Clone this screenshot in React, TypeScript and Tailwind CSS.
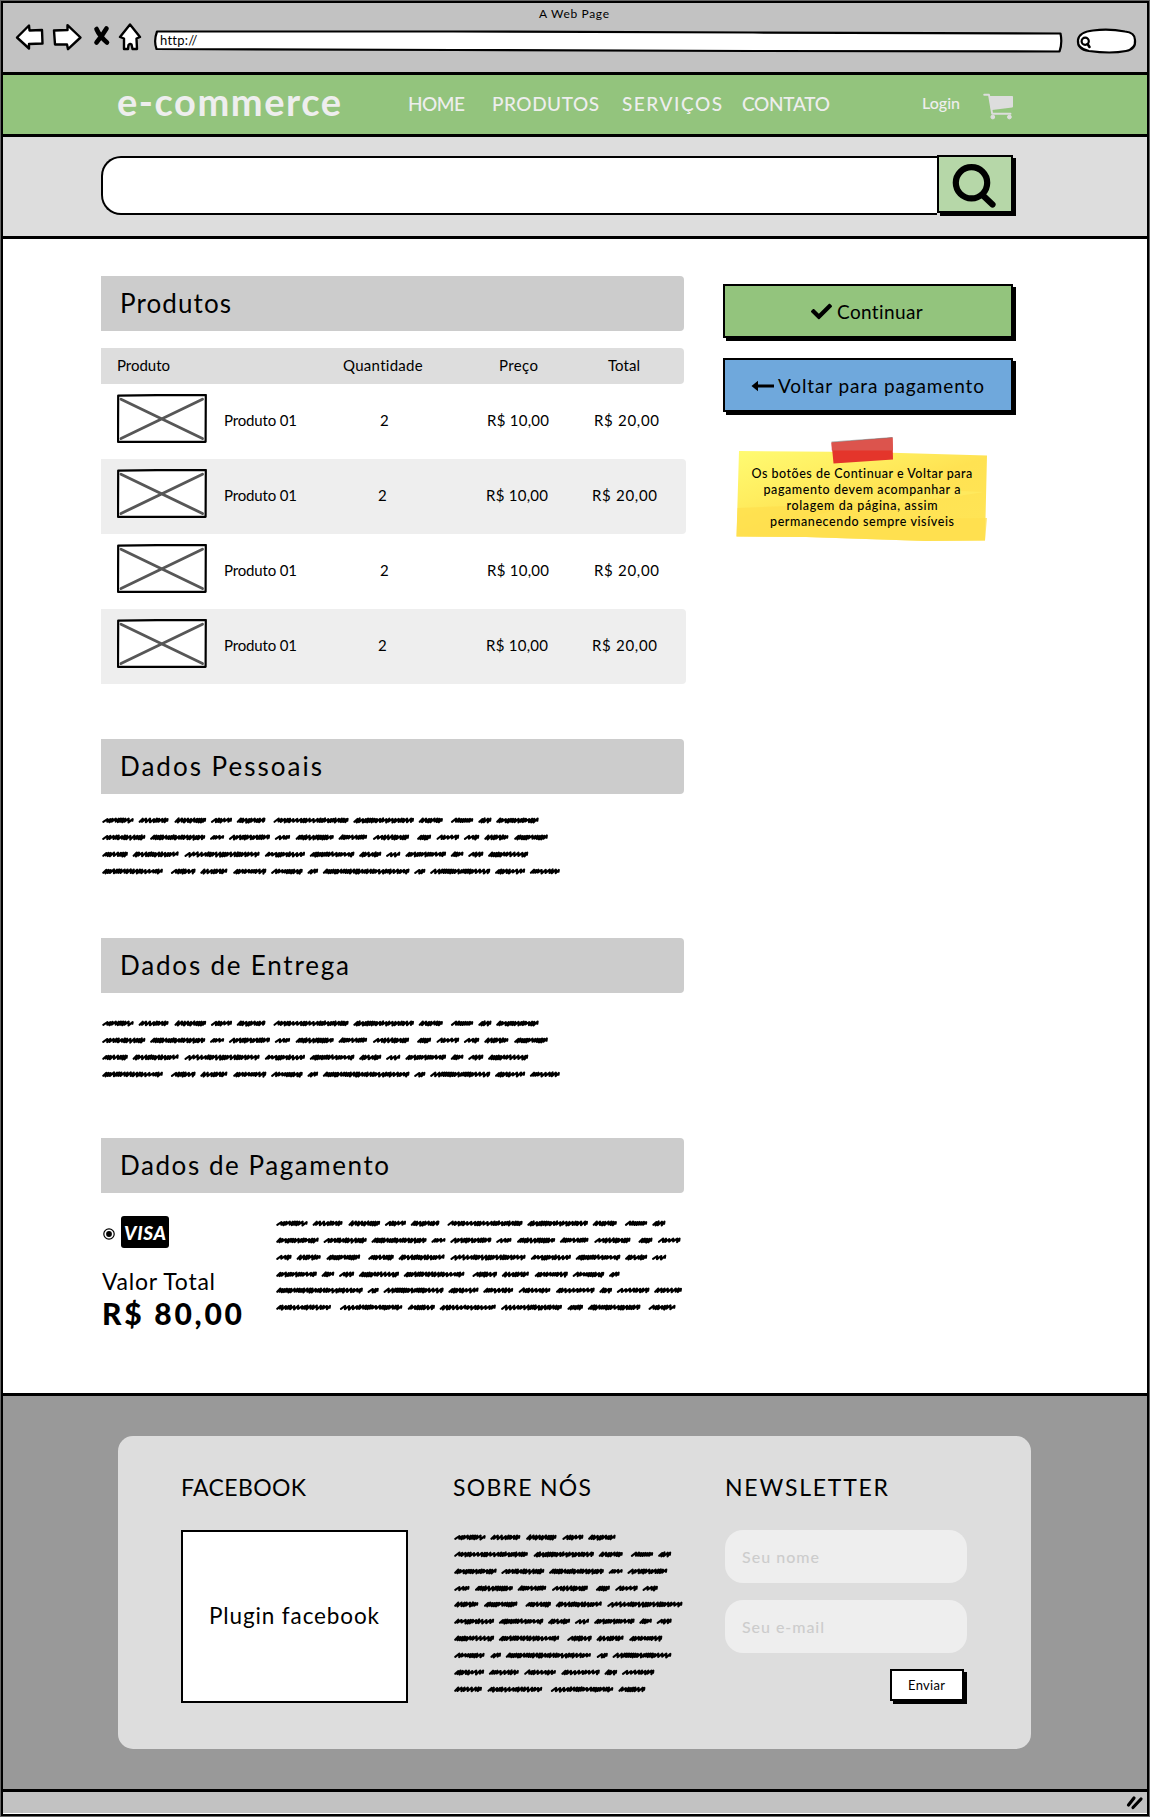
import React, { useLayoutEffect, useRef } from "react";
import { FaCheck } from "react-icons/fa";

/* Text tracked so that it spans the given width. */
function Label({ w, className = "", children }: { w: number; className?: string; children: string }) {
  const ref = useRef<HTMLSpanElement>(null);
  useLayoutEffect(() => {
    const el = ref.current;
    if (!el) return;
    el.style.letterSpacing = "0px";
    const natural = el.getBoundingClientRect().width;
    el.style.letterSpacing = `${(w - natural) / Math.max(1, children.length - 1)}px`;
  }, [w, children]);
  return (
    <span className="block" style={{ width: w }}>
      <span ref={ref} className={`inline-block whitespace-nowrap ${className}`}>
        {children}
      </span>
    </span>
  );
}

/* Handwriting placeholder. Word lengths in px; 0 marks a sentence end. */
const WORDS = [
  32, 31.5, 32, 21.5, 29, 0, 75.5, 61, 24.5, 0, 23, 13.5, 43, 43.5, 55.5, 14.5, 41.5, 16.5, 38.5, 30, 36.5, 0, 15, 23, 16,
  25.5, 34, 0, 26, 47.5, 76, 40.5, 45, 22.5, 15, 41, 13, 15.5, 40.5, 61, 0, 25, 28.5, 33.5, 32, 11, 87, 11.5, 60.5, 30.5,
  31, 33, 39, 13, 33, 29, 56, 0, 63.5, 27.5, 57, 62, 16, 53, 0, 28,
];

function scribble(x0: number, len: number, seed: number) {
  let s = seed * 7919 + 13;
  const rnd = () => ((s = (s * 1103515245 + 12345) % 2147483648), s / 2147483648);
  let x = x0 + 1.2;
  const end = x0 + len - 1.2;
  let d = `M${x.toFixed(1)} 9.8`;
  while (x < end - 1) {
    const wide = rnd() > 0.62;
    x = Math.min(x + (wide ? 4.2 : 3.1), end);
    d += ` L${x.toFixed(1)} ${(6.4 + rnd() * 0.7).toFixed(1)}`;
    if (x >= end - 1.2) {
      d += ` L${(x - 0.3).toFixed(1)} 8.8`;
      break;
    }
    x -= wide ? 0.2 : 0.9;
    d += ` L${x.toFixed(1)} ${(9.5 + rnd() * 1.1).toFixed(1)}`;
  }
  return d;
}

function Scribbles({ rows, w, scale = 1 }: { rows: number[]; w: number; scale?: number }) {
  let i = 0;
  return (
    <div className="flex flex-col">
      {rows.map((count, r) => {
        let x = 0;
        let n = 0;
        const parts: string[] = [];
        while (n < count) {
          const word = WORDS[i];
          if (word === 0) {
            if (x > 0) x += 3.3;
          } else {
            parts.push(scribble(x, word * scale, i + 1));
            x += word * scale + 4.4;
            n++;
          }
          i++;
        }
        return (
          <svg key={r} width={w} height="16.85" viewBox={`0 0 ${w} 16.85`} className="block overflow-visible">
            <path d={parts.join(" ")} fill="none" stroke="#000" strokeWidth="2.1" strokeLinecap="round" strokeLinejoin="round" />
          </svg>
        );
      })}
    </div>
  );
}

function SectionBar({ title, w }: { title: string; w: number }) {
  return (
    <h2 className="flex h-[55px] w-[583px] items-center rounded-r-sm bg-[#ccc] pb-[2px] pl-[19px] text-[26px] leading-none">
      <Label w={w}>{title}</Label>
    </h2>
  );
}

function Thumb() {
  return (
    <svg width="90" height="49" viewBox="0 0 90 49" className="block shrink-0">
      <path d="M1.2 1.6L40 1.2L88.8 1L88.6 47.8L1 47.8Z" fill="#fff" stroke="#000" strokeWidth="2.2" strokeLinejoin="round" />
      <path d="M4 5.2L85.5 44.5M85.5 5.2L4 44.5" stroke="#575757" strokeWidth="2.9" strokeLinecap="round" />
    </svg>
  );
}

function Row({ shaded }: { shaded: boolean }) {
  return (
    <div
      className={`flex h-[75px] w-[585px] pl-[16px] text-[15px] leading-none ${shaded ? "rounded-r-sm bg-[#eee]" : "bg-white"}`}
    >
      <div className="pt-[10px]">
        <Thumb />
      </div>
      <div className="flex h-[72px] items-center pl-[17px]">
        <Label w={73}>Produto 01</Label>
        <div className={`flex items-center ${shaded ? "ml-[81px]" : "ml-[83px]"}`}>
          <Label w={9}>2</Label>
          <div className={shaded ? "ml-[99px]" : "ml-[98px]"}>
            <Label w={62}>R$ 10,00</Label>
          </div>
          <div className={shaded ? "ml-[44px]" : "ml-[45px]"}>
            <Label w={65}>R$ 20,00</Label>
          </div>
        </div>
      </div>
    </div>
  );
}

function BrowserBar() {
  return (
    <header className="flex h-[72px] flex-col border-b-3 border-black bg-[#c2c2c2]">
      <div className="flex h-[20px] items-center pl-[536px] pt-px text-[12px] leading-none">
        <Label w={70}>A Web Page</Label>
      </div>
      <div className="flex items-start">
        <svg width="150" height="32" viewBox="0 0 150 32" className="block shrink-0" fill="#fff" stroke="#000" strokeWidth="2.4" strokeLinejoin="round" strokeLinecap="round">
          <path d="M14 14.5L26 2.5L26.5 7.5L39 7L39.5 20.5L26 21L26 25.5Z" />
          <path d="M51 7.5L64.5 7L64.5 2.2L77.5 14.5L65 26.2L64 21.5L52 21.5Z" />
          <path d="M117 14L127 1.5L137 14L133.5 15.5L134 26L129.5 26L128.5 21.5Q127 20.5 125.5 22L125 26L121 26L121 15.5Z" />
          <path d="M93.5 6Q96.5 13 104 19.5M103.5 5.5Q99 13 93.5 19.5" strokeWidth="4.6" fill="none" />
        </svg>
        <div className="relative h-[32px] w-[911px]">
          <svg width="911" height="32" viewBox="0 0 911 32" className="absolute inset-0">
            <path d="M4 8.5L300 8.5L600 9.5L907.5 10.5Q909.5 20 906.5 28.5L600 28L300 27L3.5 26Q0.5 18 4 8.5Z" fill="#fff" stroke="#000" strokeWidth="2.2" strokeLinejoin="round" />
          </svg>
          <div className="relative pl-[7px] pt-[11px] text-[13px] leading-none">
            <Label w={37}>http://</Label>
          </div>
        </div>
        <svg width="64" height="34" viewBox="0 0 64 34" className="ml-[11px] block shrink-0" fill="none" stroke="#000" strokeWidth="2.2">
          <path d="M3 17Q4 9 18 7.5Q34 5.5 50 8.5Q60 9.5 60 17Q61 26 51 28Q36 31 14 28Q2 26 3 17Z" fill="#fff" />
          <ellipse cx="10.2" cy="18.3" rx="3.6" ry="3.6" strokeWidth="2.2" />
          <path d="M12.5 21L14.5 24" strokeWidth="2.6" strokeLinecap="round" />
        </svg>
      </div>
    </header>
  );
}

function Cart() {
  return (
    <svg width="31" height="27" viewBox="0 0 31 27" className="ml-[23px] mt-[4px] block shrink-0" fill="#ddd" stroke="#ddd">
      <path d="M1.2 1.8H6L9.2 20.8H27.5" fill="none" strokeWidth="1.9" strokeLinecap="round" strokeLinejoin="round" />
      <path d="M6.8 3.8H29.2V13.6L8.8 16.2Z" strokeWidth="1.6" strokeLinejoin="round" />
      <circle cx="9.8" cy="24" r="1.9" />
      <circle cx="26.4" cy="24" r="1.9" />
    </svg>
  );
}

function NavBar() {
  return (
    <nav className="flex h-[62px] items-center border-b-3 border-black bg-[#93c47d] pl-[114px] leading-none text-[#eee]">
      <div className="pb-[7px] text-[38px] font-bold">
        <Label w={224}>e-commerce</Label>
      </div>
      <div className="ml-[67px] flex pb-[3px] text-[19px] font-medium">
        <Label w={57}>HOME</Label>
        <div className="ml-[27px]"><Label w={107}>PRODUTOS</Label></div>
        <div className="ml-[23px]"><Label w={100}>SERVIÇOS</Label></div>
        <div className="ml-[20px]"><Label w={88}>CONTATO</Label></div>
      </div>
      <div className="ml-[92px] pb-[4px] text-[16px] font-medium">
        <Label w={38}>Login</Label>
      </div>
      <Cart />
    </nav>
  );
}

function SearchBar() {
  return (
    <section className="flex h-[102px] items-start border-b-3 border-black bg-[#ddd] pl-[98px] pt-[18px]">
      <div className="mt-[1px] h-[59px] w-[836px] rounded-l-[20px] border-2 border-r-0 border-black bg-white" />
      <div className="flex h-[58px] w-[76px] items-center justify-center border-2 border-black bg-[#b6d7a8] shadow-[3px_3px_0_#000]">
        <svg width="50" height="48" viewBox="0 0 50 48" fill="none" stroke="#000">
          <ellipse cx="21.5" cy="22.8" rx="15.7" ry="15.6" strokeWidth="6.2" />
          <path d="M33 35.5L42.5 44.5" strokeWidth="6.2" strokeLinecap="round" />
        </svg>
      </div>
    </section>
  );
}

function StickyNote() {
  return (
    <div className="relative ml-[13px] mt-[24px] h-[106px] w-[252px] text-[12.5px] font-medium">
      <svg width="252" height="106" viewBox="0 0 252 106" className="absolute inset-0">
        <defs>
          <linearGradient id="note" x1="0" y1="0" x2="0.8" y2="0.9">
            <stop offset="0" stopColor="#fffb72" />
            <stop offset="0.35" stopColor="#ffee60" />
            <stop offset="0.6" stopColor="#ffe252" />
            <stop offset="1" stopColor="#ffe455" />
          </linearGradient>
        </defs>
        <path d="M3 15L130 16L251 19.5L249 104.5L190 105L70 101L0.5 100.5Z" fill="url(#note)" />
        <path d="M1.5 72L50 70L100 74L60 84L251 82L249 104.5L190 105L70 101L0.5 100.5Z" fill="#ffdf4e" opacity="0.75" />
        <path d="M70 58L160 52L248 56L210 62L120 66Z" fill="#ffeb62" opacity="0.7" />
        <path d="M95.5 6.5L156.5 1.5L157 23.5L97.5 27.5Z" fill="#e4352b" />
        <path d="M95.5 6.5L156.5 1.5L157 14.5L95.8 14.5Z" fill="#dc544d" />
        <path d="M95.5 6L156.5 1.5" stroke="#777" strokeWidth="0.6" />
      </svg>
      <div className="relative flex flex-col items-center pt-[30px] leading-[16px]">
        <Label w={221}>Os botões de Continuar e Voltar para</Label>
        <Label w={197}>pagamento devem acompanhar a</Label>
        <Label w={151}>rolagem da página, assim</Label>
        <Label w={184}>permanecendo sempre visíveis</Label>
      </div>
    </div>
  );
}

function Actions() {
  return (
    <aside className="ml-[37px] flex flex-col pt-[45px] leading-none">
      <button className="flex h-[54px] w-[290px] items-center border-2 border-black bg-[#93c47d] pl-[86px] text-[19px] shadow-[3px_3px_0_#000]">
        <FaCheck className="mt-px h-[21px] w-[21px]" />
        <div className="ml-[5px]"><Label w={86}>Continuar</Label></div>
      </button>
      <button className="mt-[20px] flex h-[54px] w-[290px] items-center border-2 border-black bg-[#6fa8dc] pl-[26px] text-[19px] shadow-[3px_3px_0_#000]">
        <svg width="24" height="12" viewBox="0 0 24 12" className="mt-px">
          <path d="M0.5 6L7 0.8V4.4H23V7.6H7V11.2Z" />
        </svg>
        <div className="ml-[3px]"><Label w={206}>Voltar para pagamento</Label></div>
      </button>
      <StickyNote />
    </aside>
  );
}

function Checkout() {
  return (
    <div className="flex flex-col pt-[37px]">
      <SectionBar title="Produtos" w={111} />
      <div className="mt-[17px] flex h-[36px] w-[583px] items-center rounded-r-sm bg-[#ddd] pb-[2px] pl-[16px] text-[15px] leading-none">
        <Label w={53}>Produto</Label>
        <div className="ml-[173px]"><Label w={80}>Quantidade</Label></div>
        <div className="ml-[76px]"><Label w={39}>Preço</Label></div>
        <div className="ml-[70px]"><Label w={32}>Total</Label></div>
      </div>
      <Row shaded={false} />
      <Row shaded />
      <Row shaded={false} />
      <Row shaded />

      <div className="mt-[55px]"><SectionBar title="Dados Pessoais" w={202} /></div>
      <div className="ml-[1px] mt-[18px] h-[126px]"><Scribbles rows={[11, 13, 11, 11]} w={470} /></div>

      <SectionBar title="Dados de Entrega" w={229} />
      <div className="ml-[1px] mt-[22px] h-[123px]"><Scribbles rows={[11, 13, 11, 11]} w={470} /></div>

      <SectionBar title="Dados de Pagamento" w={269} />
      <div className="flex pt-[22px]">
        <div className="flex w-[175px] flex-col leading-none">
          <div className="flex items-center pl-[2px] pt-[1px]">
            <svg width="12" height="12" viewBox="0 0 12 12" className="mt-[3px]">
              <circle cx="6" cy="6" r="5.2" fill="#fff" stroke="#000" strokeWidth="1.2" />
              <circle cx="6" cy="6" r="2.9" />
            </svg>
            <div className="ml-[6px] flex h-[32px] w-[48px] items-center rounded-[3px] bg-black pl-[3px] text-[19px] font-black italic text-white">
              <Label w={42}>VISA</Label>
            </div>
          </div>
          <div className="ml-[1px] mt-[22px] text-[23px]"><Label w={113}>Valor Total</Label></div>
          <div className="ml-[1px] mt-[5px] text-[30px] font-black"><Label w={140}>R$ 80,00</Label></div>
        </div>
        <Scribbles rows={[10, 11, 10, 10, 10, 8]} w={407} />
      </div>
    </div>
  );
}

function Footer() {
  return (
    <footer className="flex h-[396px] items-start border-b-3 border-black bg-[#999] pl-[115px] pt-[40px]">
      <div className="flex h-[313px] w-[913px] rounded-[15px] bg-[#ddd] pl-[63px] pt-[40px] leading-none">
        <div className="w-[272px]">
          <h3 className="text-[23px]"><Label w={125}>FACEBOOK</Label></h3>
          <div className="mt-[31px] flex h-[173px] w-[227px] items-center border-2 border-black bg-white pb-px pl-[26px] text-[22.5px]">
            <Label w={170}>Plugin facebook</Label>
          </div>
        </div>
        <div className="w-[272px]">
          <h3 className="text-[23px]"><Label w={138}>SOBRE NÓS</Label></h3>
          <div className="mt-[30px] pl-[1px]">
            <Scribbles rows={[5, 5, 5, 7, 5, 7, 5, 5, 6, 4]} w={230} scale={0.995} />
          </div>
        </div>
        <div className="flex w-[242px] flex-col">
          <h3 className="text-[23px]"><Label w={163}>NEWSLETTER</Label></h3>
          <div className="mt-[31px] flex h-[53px] items-center rounded-[18px] bg-[#eee] pl-[17px] text-[16px] font-medium text-[#ccc]">
            <Label w={77}>Seu nome</Label>
          </div>
          <div className="mt-[17px] flex h-[53px] items-center rounded-[18px] bg-[#eee] pl-[17px] text-[16px] font-medium text-[#ccc]">
            <Label w={82}>Seu e-mail</Label>
          </div>
          <button className="ml-[165px] mt-[16px] flex h-[32px] w-[74px] items-center border-2 border-black bg-white pl-[16px] text-[13px] shadow-[3px_3px_0_#000]">
            <Label w={37}>Enviar</Label>
          </button>
        </div>
      </div>
    </footer>
  );
}

export default function App() {
  return (
    <div className="h-[1817px] w-[1150px] bg-[#666] p-px font-['Lato',sans-serif] text-black">
      <div className="flex h-[1815px] w-[1148px] flex-col border-2 border-black bg-white">
        <BrowserBar />
        <NavBar />
        <SearchBar />
        <main className="flex h-[1157px] items-start border-b-3 border-black pl-[98px]">
          <Checkout />
          <Actions />
        </main>
        <Footer />
        <div className="flex h-[21px] items-center justify-end bg-[#c2c2c2] pr-[3px]">
          <svg width="18" height="15" viewBox="0 0 18 15" stroke="#000" strokeWidth="3.2" strokeLinecap="round">
            <path d="M2.5 10L8 3M7 12.5L15 4" />
          </svg>
        </div>
      </div>
    </div>
  );
}
